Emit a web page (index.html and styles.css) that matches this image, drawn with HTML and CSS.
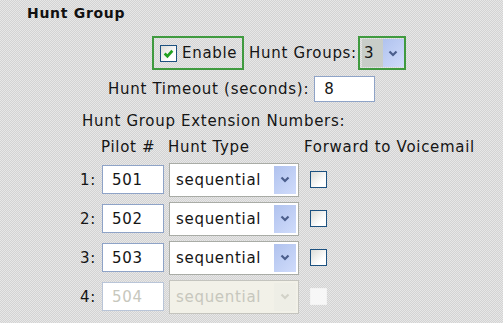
FILE: index.html
```html
<!DOCTYPE html>
<html>
<head>
<meta charset="utf-8">
<link rel="stylesheet" href="styles.css">
</head>
<body>
<div class="page">
  <div class="title">Hunt Group</div>
  <div class="enable-row">
    <div class="hl enable-box">
      <span class="cb checked"><svg viewBox="0 0 10 10" width="11" height="11"><path d="M1.5 5 L4 7.5 L8.5 2.5" fill="none" stroke="#21a121" stroke-width="2.4"/></svg></span>
      <span>Enable</span>
    </div>
    <span class="lbl-groups">Hunt Groups:</span>
    <div class="hl groups-box">
      <div class="sel small"><span class="val">3</span><span class="btn"><svg viewBox="0 0 10 7" width="10" height="7"><path d="M1.5 1.5 L5 5 L8.5 1.5" fill="none" stroke="#4b5e8c" stroke-width="2.2"/></svg></span></div>
    </div>
  </div>
  <div class="timeout-row">
    <span>Hunt Timeout (seconds):</span>
    <span class="inp timeout">8</span>
  </div>
  <div class="ext-title">Hunt Group Extension Numbers:</div>
  <div class="grid">
    <span></span><span class="hd">Pilot #</span><span class="hd">Hunt Type</span><span class="hd">Forward to Voicemail</span>

    <span class="num">1:</span><span class="inp pilot">501</span>
    <div class="sel type"><span class="val">sequential</span><span class="btn"><svg viewBox="0 0 10 7" width="10" height="7"><path d="M1.5 1.5 L5 5 L8.5 1.5" fill="none" stroke="#4b5e8c" stroke-width="2.2"/></svg></span></div>
    <span class="fwd"><span class="cb"></span></span>

    <span class="num">2:</span><span class="inp pilot">502</span>
    <div class="sel type"><span class="val">sequential</span><span class="btn"><svg viewBox="0 0 10 7" width="10" height="7"><path d="M1.5 1.5 L5 5 L8.5 1.5" fill="none" stroke="#4b5e8c" stroke-width="2.2"/></svg></span></div>
    <span class="fwd"><span class="cb"></span></span>

    <span class="num">3:</span><span class="inp pilot">503</span>
    <div class="sel type"><span class="val">sequential</span><span class="btn"><svg viewBox="0 0 10 7" width="10" height="7"><path d="M1.5 1.5 L5 5 L8.5 1.5" fill="none" stroke="#4b5e8c" stroke-width="2.2"/></svg></span></div>
    <span class="fwd"><span class="cb"></span></span>

    <span class="num">4:</span><span class="inp pilot disabled">504</span>
    <div class="sel type disabled"><span class="val">sequential</span><span class="btn"><svg viewBox="0 0 10 7" width="10" height="7"><path d="M1.5 1.5 L5 5 L8.5 1.5" fill="none" stroke="#d2d2c8" stroke-width="2.2"/></svg></span></div>
    <span class="fwd"><span class="cb disabled"></span></span>
  </div>
</div>
</body>
</html>
```
FILE: styles.css
```css
html, body {
  margin: 0;
  padding: 0;
}
body {
  width: 503px;
  height: 323px;
  overflow: hidden;
  background: repeating-conic-gradient(#d3d3d3 0 25%, #e7e7e7 0 50%) 0 0 / 2px 2px;
  font-family: "DejaVu Sans", Verdana, sans-serif;
  font-size: 15px;
  letter-spacing: 0.7px;
  color: #151515;
}
.page {
  display: flex;
  flex-direction: column;
}
.title {
  font-weight: bold;
  font-size: 14px;
  letter-spacing: 0.7px;
  color: #111;
  padding: 5px 0 0 27px;
  line-height: 17px;
}
.enable-row {
  display: flex;
  align-items: center;
  margin: 14px 0 0 152px;
  height: 34px;
}
.hl {
  border: 2px solid #3f9a3f;
  box-sizing: border-box;
  height: 34px;
  display: flex;
  align-items: center;
}
.enable-box {
  width: 92px;
  padding-left: 6px;
  gap: 5px;
}
.lbl-groups {
  margin-left: 5px;
  margin-right: 1px;
}
.groups-box {
  width: 48px;
  padding-left: 2px;
}
.cb {
  width: 13px;
  height: 13px;
  border: 1px solid #1c5180;
  background: linear-gradient(135deg, #dcdcd7, #fff 70%);
  display: inline-flex;
  align-items: center;
  justify-content: center;
  flex: none;
}
.cb.checked {
  width: 15px;
  height: 15px;
}
.cb.disabled {
  border-color: #f3f3f3;
  background: #f7f7f7;
}
.sel {
  display: flex;
  align-items: center;
  box-sizing: border-box;
  background: #fff;
}
.sel .btn {
  display: flex;
  align-items: center;
  justify-content: center;
  background: linear-gradient(135deg, #b0c2ee, #d0dcfb);
  align-self: stretch;
}
.sel.small {
  height: 28px;
  width: 42px;
  background: #c8cdc8;
}
.sel.small .val {
  width: 19px;
  padding-left: 2px;
}
.sel.small .btn {
  width: 21px;
}
.timeout-row {
  display: flex;
  align-items: center;
  margin: 6px 0 0 108px;
  height: 26px;
}
.inp {
  box-sizing: border-box;
  border: 1px solid #8ea3c7;
  background: #fff;
  display: flex;
  align-items: center;
  padding-left: 9px;
}
.timeout {
  margin-left: 5px;
  width: 61px;
  height: 26px;
}
.ext-title {
  margin: 9px 0 0 82px;
  line-height: 20px;
}
.grid {
  display: grid;
  grid-template-columns: 20px 62px 130px auto;
  column-gap: 5px;
  grid-template-rows: 26px repeat(4, 39px);
  align-items: center;
  margin: 3px 0 0 77px;
}
.hd {
  align-self: center;
  white-space: nowrap;
}
.grid .hd:nth-child(2) { margin-left: -1px; }
.grid .hd:nth-child(3) { margin-left: -1px; }
.num {
  text-align: right;
  margin-right: 1px;
}
.pilot {
  height: 29px;
}
.type {
  height: 34px;
  border: 1px solid #a9aca6;
  padding: 2px;
}
.type .val {
  flex: 1;
  padding-left: 4px;
}
.type .btn {
  width: 22px;
}
.fwd {
  padding-left: 6px;
  display: flex;
  align-items: center;
}
.fwd .cb {
  width: 15px;
  height: 15px;
}
.disabled {
  color: #c7c7bd;
}
.inp.disabled {
  border-color: #b9c5d8;
}
.sel.disabled {
  background: #f2f1e8;
  border-color: #c4c4be;
}
.sel.disabled .btn {
  background: #eeeee6;
}
```
